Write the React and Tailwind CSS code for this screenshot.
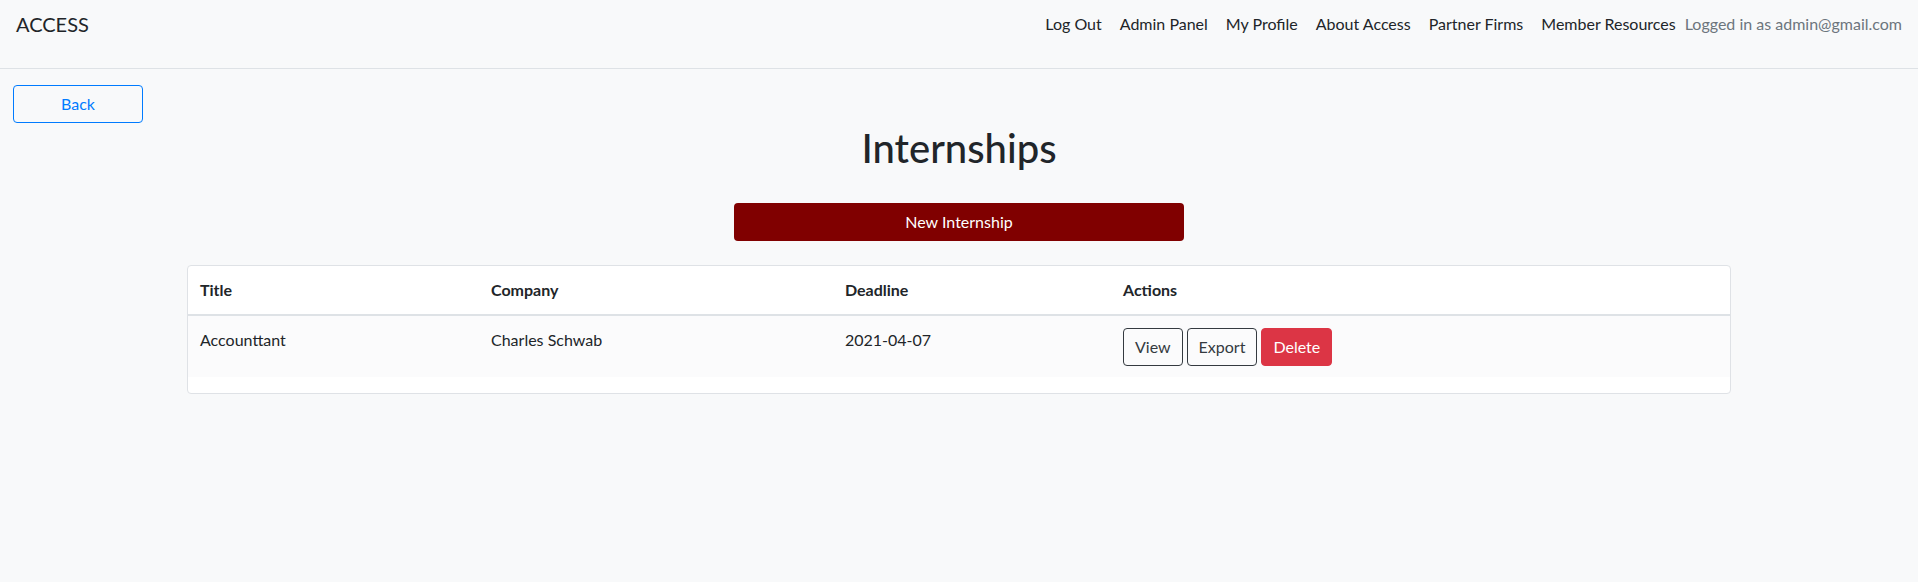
import React from 'react';

const navLinks = ['Log Out', 'Admin Panel', 'My Profile', 'About Access', 'Partner Firms', 'Member Resources'];

const internships = [
    { title: 'Accounttant', company: 'Charles Schwab', deadline: '2021-04-07' },
];

const App = () => {
    return (
        <div className="min-h-screen bg-[#f8f9fa] text-[#212529] text-base font-['Lato',sans-serif]">
            {/* Top navigation */}
            <header className="h-[69px] border-b border-[#dee2e6] px-4 pt-3 flex items-start justify-between">
                <a className="text-[20px] leading-6 text-[#212529]">ACCESS</a>
                <nav className="flex items-center leading-6">
                    {navLinks.map((link) => (
                        <a key={link} className="px-[9px] text-[#212529] cursor-pointer">
                            {link}
                        </a>
                    ))}
                    <span className="text-[#6c757d]">Logged in as admin@gmail.com</span>
                </nav>
            </header>

            <main className="flex flex-col">
                <div className="px-[13px] pt-4">
                    <button className="w-[130px] h-[38px] rounded border border-[#007bff] text-[#007bff] leading-6">
                        Back
                    </button>
                </div>

                <h1 className="text-center text-[40px] font-medium leading-[48px] mt-px">Internships</h1>

                <div className="flex justify-center mt-[31px]">
                    <button className="w-[450px] h-[38px] rounded bg-[#800000] text-white leading-6">
                        New Internship
                    </button>
                </div>

                {/* Internship table */}
                <div className="mx-auto mt-6 w-[1544px] bg-white border border-[#dfe2e6] rounded pb-4">
                    <table className="w-full text-left border-collapse">
                        <thead>
                            <tr className="border-b-2 border-[#dee2e6]">
                                <th className="w-[291px] px-3 py-3 font-bold leading-6">Title</th>
                                <th className="w-[354px] px-3 py-3 font-bold leading-6">Company</th>
                                <th className="w-[278px] px-3 py-3 font-bold leading-6">Deadline</th>
                                <th className="px-3 py-3 font-bold leading-6">Actions</th>
                            </tr>
                        </thead>
                        <tbody>
                            {internships.map((row) => (
                                <tr key={row.title} className="bg-[#fbfbfc] align-top">
                                    <td className="px-3 py-3 leading-6">{row.title}</td>
                                    <td className="px-3 py-3 leading-6">{row.company}</td>
                                    <td className="px-3 py-3 leading-6">{row.deadline}</td>
                                    <td className="px-3 pt-3 pb-[11px]">
                                        <div className="flex gap-1">
                                            <button className="h-[38px] px-[11px] rounded border border-[#343a40] text-[#343a40] leading-6">
                                                View
                                            </button>
                                            <button className="h-[38px] px-[11px] rounded border border-[#343a40] text-[#343a40] leading-6">
                                                Export
                                            </button>
                                            <button className="h-[38px] px-[11px] rounded border border-[#dc3545] bg-[#dc3545] text-white leading-6">
                                                Delete
                                            </button>
                                        </div>
                                    </td>
                                </tr>
                            ))}
                        </tbody>
                    </table>
                </div>
            </main>
        </div>
    );
};

export default App;
